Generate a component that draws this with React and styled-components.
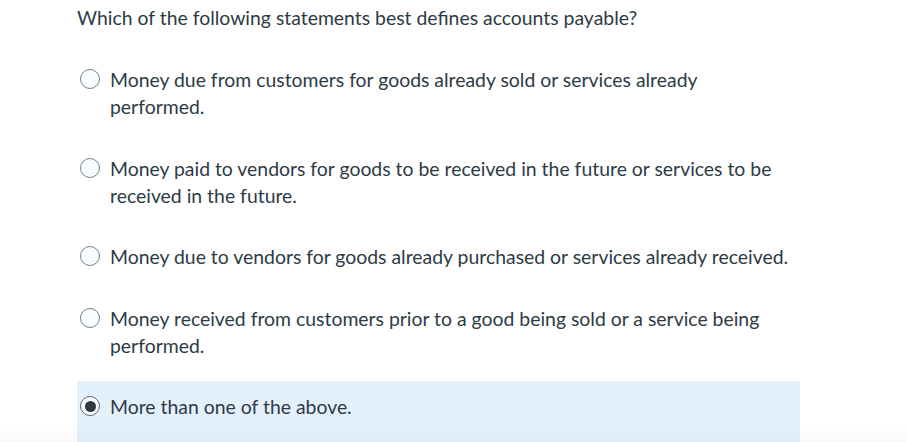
import React from "react";
import styled, { createGlobalStyle } from "styled-components";

const GlobalStyle = createGlobalStyle`
  body {
    margin: 0;
    background: #ffffff;
    font-family: Lato, "Noto Sans", sans-serif;
    color: #2d3b45;
  }
`;

const Page = styled.div`
  width: 906px;
  height: 442px;
  overflow: hidden;
  padding: 4px 0 0 77px;
  box-sizing: border-box;
  position: relative;
`;

const BottomFade = styled.div`
  position: absolute;
  left: 0;
  right: 0;
  bottom: 0;
  height: 18px;
  background: linear-gradient(to bottom, rgba(0, 0, 0, 0), rgba(0, 0, 0, 0.025));
  pointer-events: none;
`;

const Question = styled.p`
  margin: 0 0 23px;
  font-size: 19.4px;
  line-height: 27px;
`;

const Options = styled.div`
  width: 723px;
  display: flex;
  flex-direction: column;
  gap: 10.5px;
`;

const Option = styled.label`
  display: flex;
  align-items: flex-start;
  gap: 10px;
  padding: ${(p) => (p.$selected ? "12px 0 40px 3px" : "12px 0 12px 3px")};
  background: ${(p) => (p.$selected ? "#e4f0fc" : "transparent")};
  font-size: 19.4px;
  line-height: 27px;
  cursor: pointer;
`;

const Radio = styled.span`
  flex: none;
  width: 20px;
  height: 20px;
  margin-top: 3px;
  border-radius: 50%;
  border: 1px solid ${(p) => (p.$checked ? "#5b6770" : "#73818c")};
  background: #fbfcff;
  box-sizing: border-box;
  display: flex;
  align-items: center;
  justify-content: center;

  &::after {
    content: "";
    display: ${(p) => (p.$checked ? "block" : "none")};
    width: 11px;
    height: 11px;
    border-radius: 50%;
    background: #2d3b45;
  }
`;

const OptionText = styled.span`
  max-width: 685px;
`;

const options = [
  "Money due from customers for goods already sold or services already performed.",
  "Money paid to vendors for goods to be received in the future or services to be received in the future.",
  "Money due to vendors for goods already purchased or services already received.",
  "Money received from customers prior to a good being sold or a service being performed.",
  "More than one of the above.",
];

export default function App() {
  const selected = 4;
  return (
    <>
      <GlobalStyle />
      <Page>
        <Question>Which of the following statements best defines accounts payable?</Question>
        <Options>
          {options.map((text, i) => (
            <Option key={i} $selected={i === selected}>
              <Radio $checked={i === selected} />
              <OptionText>{text}</OptionText>
            </Option>
          ))}
        </Options>
        <BottomFade />
      </Page>
    </>
  );
}
